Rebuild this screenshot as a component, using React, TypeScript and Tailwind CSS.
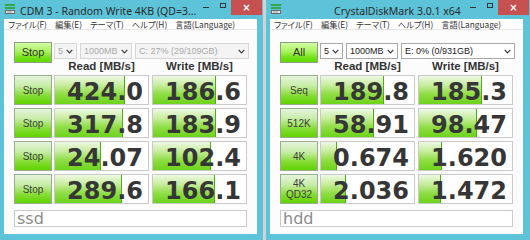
import React from "react";

type Row = { label: React.ReactNode; read: string; write: string };

type WindowProps = {
    title: string;
    centerTitle?: boolean;
    topLabel: string;
    disabled?: boolean;
    combos: [string, string, string];
    rows: Row[];
    comment: string;
    wide?: boolean;
};

// bars in CDM are drawn on a log scale
const barWidth = (v: string) => {
    const n = parseFloat(v);
    return Math.max(0, Math.min(93, 19 + 19.4 * Math.log10(n)));
};

const AppIcon = () => (
    <svg width="10" height="10" viewBox="0 0 10 10" className="shrink-0">
        <rect x="0" y="0" width="10" height="2" fill="#3aa54a" />
        <rect x="0" y="3" width="10" height="2" fill="#3aa54a" />
        <rect x="0.5" y="6.5" width="9" height="3" fill="#e8e8e8" stroke="#6b6b6b" />
        <rect x="2" y="7.5" width="5" height="1" fill="#9a9a9a" />
    </svg>
);

const Chevron = () => (
    <svg width="7" height="5" viewBox="0 0 7 5" className="shrink-0">
        <polyline points="0.7,0.8 3.5,3.8 6.3,0.8" fill="none" stroke="#3a3a3a" strokeWidth="1.2" />
    </svg>
);

const Combo = ({ text, width, disabled }: { text: string; width: string; disabled?: boolean }) => (
    <div
        className={`${width} h-[16px] flex items-center justify-between pl-[3px] pr-[3px] border text-[9px] leading-none font-['Liberation_Sans',sans-serif]
            ${disabled ? "bg-[#f4f4f4] border-[#d6d6d6] text-[#a9a9a9]" : "bg-white border-[#a9a9a9] text-[#222]"}`}
    >
        <span className="whitespace-nowrap">{text}</span>
        <Chevron />
    </div>
);

const ValueCell = ({ value }: { value: string }) => (
    <div className="relative w-[95px] h-[30px] border border-[#c9c9c9] bg-white overflow-hidden flex items-end justify-end">
        <div
            className="absolute left-0 top-0 bottom-0 border-r border-[#4fae14] bg-[linear-gradient(to_bottom,#eef9e4_0%,#c4ec98_35%,#8fdd45_65%,#6cd41a_100%)]"
            style={{ width: barWidth(value) }}
        />
        <span className="relative pr-[5px] text-[24px] leading-none font-bold text-[#363636] font-['DejaVu_Sans',sans-serif]">
            {value}
        </span>
    </div>
);

const CdmWindow = ({ title, centerTitle, topLabel, disabled, combos, rows, comment, wide }: WindowProps) => (
    <div className={`${wide ? "w-[264px]" : "w-[263px]"} h-[240px] bg-[#5dc3d9] flex flex-col`}>
        {/* title bar */}
        <div className="h-[19px] flex items-start">
            <div className="pl-[5px] pt-[4px]">
                <AppIcon />
            </div>
            <div
                className={`flex-1 pt-[5px] text-[10.5px] leading-[12px] text-[#2b2b2b] whitespace-nowrap font-['Noto_Sans',sans-serif]
                    ${centerTitle ? "text-center pl-[50px]" : "pl-[5px]"}`}
            >
                {title}
            </div>
            <div className="w-[17px] h-[15px] flex items-start justify-center pt-[7px]">
                <div className="w-[6px] h-[1px] bg-[#333]" />
            </div>
            <div className="w-[17px] h-[15px] flex items-start justify-center pt-[3px]">
                <div className="w-[6px] h-[5px] border border-[#333]" />
            </div>
            <div className="w-[31px] h-[15px] mr-[1px] bg-[#c75050] flex items-center justify-center text-white text-[10px] leading-none font-bold font-['DejaVu_Sans',sans-serif]">
                ×
            </div>
        </div>

        {/* client */}
        <div className={`flex-1 ml-[4px] ${wide ? "mr-[7px]" : "mr-[6px]"} bg-[#fcfcfc] flex flex-col`}>
            <div className="h-[11px] bg-white border-b border-[#e6e6e6] flex items-center gap-[8px] pl-[4px] text-[8.3px] leading-none text-[#333] whitespace-nowrap font-['Noto_Sans_CJK_JP',sans-serif] [font-feature-settings:'palt']">
                <span>ファイル(F)</span>
                <span>編集(E)</span>
                <span>テーマ(T)</span>
                <span>ヘルプ(H)</span>
                <span>言語(Language)</span>
            </div>

            <div className="pl-[10px] pt-[12px] flex flex-col">
                <div className="flex gap-[2px] h-[33px]">
                    <div className="w-[38px] h-[21px] border border-[#8e9e86] bg-[linear-gradient(to_bottom,#d2fda6_0%,#a8f25c_45%,#6fe012_80%,#62d800_100%)] flex items-center justify-center text-[11px] text-[#333] font-['Liberation_Sans',sans-serif]">
                        {topLabel}
                    </div>
                    <div className="flex flex-col pt-[1px]">
                        <div className="flex gap-[3px]">
                            <Combo text={combos[0]} width="w-[23px]" disabled={disabled} />
                            <Combo text={combos[1]} width="w-[52px]" disabled={disabled} />
                            <Combo text={combos[2]} width="w-[114px]" disabled={disabled} />
                        </div>
                        <div className="h-[16px] flex items-center gap-[3px] text-[11.5px] font-bold text-[#333] font-['Liberation_Sans',sans-serif]">
                            <span className="w-[95px] text-center">Read [MB/s]</span>
                            <span className="w-[95px] text-center">Write [MB/s]</span>
                        </div>
                    </div>
                </div>

                <div className="flex flex-col gap-[3px]">
                    {rows.map((r, i) => (
                        <div key={i} className="flex gap-[2px]">
                            <div className="w-[38px] h-[30px] border border-[#9aae8e] bg-[linear-gradient(to_bottom,#e5f3dc_0%,#c8eda8_35%,#86dc36_70%,#5fd300_100%)] flex items-center justify-center text-center text-[10px] leading-[11px] text-[#3c3c3c] font-['Liberation_Sans',sans-serif]">
                                {r.label}
                            </div>
                            <div className="flex gap-[3px]">
                                <ValueCell value={r.read} />
                                <ValueCell value={r.write} />
                            </div>
                        </div>
                    ))}
                </div>

                <div className="mt-[6px] w-[233px] h-[17px] border border-[#cacaca] bg-white pl-[2px] text-[16px] leading-[15px] text-[#8c8c8c] font-['DejaVu_Sans',sans-serif]">
                    {comment}
                </div>
            </div>
        </div>
        <div className="h-[6px]" />
    </div>
);

const App = () => {
    return (
        <div className="w-[530px] h-[240px] bg-[#d2d2d2] flex gap-[3px] overflow-hidden">
            <CdmWindow
                title="CDM 3 - Random Write 4KB (QD=3..."
                topLabel="Stop"
                disabled
                combos={["5", "1000MB", "C: 27% (29/109GB)"]}
                rows={[
                    { label: "Stop", read: "424.0", write: "186.6" },
                    { label: "Stop", read: "317.8", write: "183.9" },
                    { label: "Stop", read: "24.07", write: "102.4" },
                    { label: "Stop", read: "289.6", write: "166.1" },
                ]}
                comment="ssd"
            />
            <CdmWindow
                title="CrystalDiskMark 3.0.1 x64"
                centerTitle
                topLabel="All"
                combos={["5", "1000MB", "E: 0% (0/931GB)"]}
                rows={[
                    { label: "Seq", read: "189.8", write: "185.3" },
                    { label: "512K", read: "58.91", write: "98.47" },
                    { label: "4K", read: "0.674", write: "1.620" },
                    {
                        label: (
                            <span>
                                4K
                                <br />
                                QD32
                            </span>
                        ),
                        read: "2.036",
                        write: "1.472",
                    },
                ]}
                comment="hdd"
                wide
            />
        </div>
    );
};

export default App;
